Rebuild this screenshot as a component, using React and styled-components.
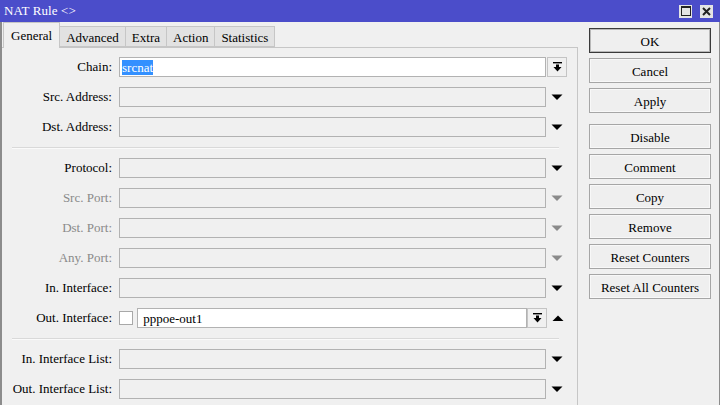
import React from "react";
import styled, { createGlobalStyle } from "styled-components";

const Global = createGlobalStyle`
  html, body { margin: 0; padding: 0; background: #f0f0f0; }
  body { width: 720px; height: 405px; overflow: hidden; }
`;

const Window = styled.div`
  width: 720px;
  height: 405px;
  box-sizing: border-box;
  display: flex;
  flex-direction: column;
  background: #f0f0f0;
  font-family: "Liberation Serif", "Times New Roman", serif;
  font-size: 13px;
  color: #000;
  overflow: hidden;
`;

const TitleBar = styled.div`
  height: 22px;
  flex: none;
  background: #4b4dca;
  display: flex;
  align-items: center;
  padding: 0 7px 0 4px;
  color: #fff;
`;

const Title = styled.div`
  flex: 1;
  font-size: 13px;
  line-height: 22px;
  letter-spacing: 0.1px;
`;

const TitleButtons = styled.div`
  display: flex;
  gap: 8px;
`;

const TitleBtn = styled.div`
  width: 13px;
  height: 13px;
  background: #e4e4e4;
  display: flex;
  align-items: center;
  justify-content: center;
`;

const Main = styled.div`
  flex: 1;
  display: flex;
  border-left: 2px solid #8c8c8c;
  border-right: 1px solid #8c8c8c;
  min-height: 0;
`;

const LeftCol = styled.div`
  width: 576px;
  flex: none;
  display: flex;
  flex-direction: column;
`;

const TabStrip = styled.div`
  height: 26px;
  display: flex;
  align-items: flex-end;
  padding-left: 1px;
  position: relative;
  z-index: 1;
`;

const Tab = styled.div`
  box-sizing: border-box;
  height: ${(p) => (p.$active ? "26px" : "21px")};
  padding: 0 ${(p) => (p.$active ? "7px" : "6px")};
  margin-bottom: ${(p) => (p.$active ? "-1px" : "0")};
  border: 1px solid #c6c6c6;
  border-bottom: ${(p) => (p.$active ? "none" : "1px solid #c6c6c6")};
  background: ${(p) => (p.$active ? "#f0f0f0" : "#e2e2e2")};
  display: flex;
  align-items: center;
  line-height: 1;
  padding-top: ${(p) => (p.$active ? "0" : "1px")};
  margin-left: ${(p) => (p.$active ? "0" : "-1px")};
`;

const Panel = styled.div`
  flex: 1;
  border-top: 1px solid #c6c6c6;
  border-right: 1px solid #c6c6c6;
  padding-top: 9px;
  display: flex;
  flex-direction: column;
`;

const Row = styled.div`
  display: flex;
  align-items: center;
  height: 20px;
  margin-bottom: 10px;
`;

const Label = styled.div`
  width: 110px;
  flex: none;
  text-align: right;
  color: ${(p) => (p.$disabled ? "#8a8a8a" : "#000")};
  margin-right: 7px;
  white-space: nowrap;
  line-height: 20px;
`;

const Field = styled.div`
  box-sizing: border-box;
  width: ${(p) => p.$w}px;
  height: 20px;
  flex: none;
  border: 1px solid #b2b2b2;
  background: ${(p) => (p.$white ? "#fff" : "#f0f0f0")};
  display: flex;
  align-items: center;
  padding-left: 2px;
  line-height: 1;
  white-space: nowrap;
`;

const Selected = styled.span`
  background: #3390ff;
  color: #fff;
  padding: 1px 0;
`;

const ArrowCell = styled.div`
  width: 12px;
  margin-left: 5px;
  display: flex;
  align-items: center;
  justify-content: center;
`;

const SmallBtn = styled.div`
  box-sizing: border-box;
  width: 20px;
  height: 20px;
  flex: none;
  margin-left: ${(p) => p.$ml || 0}px;
  border: 1px solid #c4c4c4;
  background: #f0f0f0;
  display: flex;
  align-items: center;
  justify-content: center;
`;

const Check = styled.div`
  box-sizing: border-box;
  width: 14px;
  height: 14px;
  flex: none;
  border: 1px solid #a8a8a8;
  background: #fff;
  margin-right: 4px;
`;

const Separator = styled.div`
  height: 0;
  margin: 0 18px 9px 10px;
  border-top: 1px solid #d9d9d9;
  border-bottom: 1px solid #fafafa;
`;

const RightCol = styled.div`
  flex: 1;
  padding: 6px 0 0 11px;
  display: flex;
  flex-direction: column;
`;

const Button = styled.div`
  box-sizing: border-box;
  width: 122px;
  height: 25px;
  margin-bottom: 5px;
  margin-top: ${(p) => p.$mt || 0}px;
  border: 1px solid ${(p) => (p.$default ? "#3a3a3a" : "#a6a6a6")};
  box-shadow: inset 0 0 0 1px ${(p) => (p.$default ? "#b8b8b8" : "#f8f8f8")};
  background: #efefef;
  display: flex;
  align-items: center;
  justify-content: center;
  line-height: 1;
  padding-top: 1px;
`;

const Tri = ({ up, color = "#000" }) => (
  <svg width="12" height="7" viewBox="0 0 12 7">
    {up ? (
      <polygon points="0.5,6 11.5,6 6,0.5" fill={color} />
    ) : (
      <polygon points="0.5,0.5 11.5,0.5 6,6" fill={color} />
    )}
  </svg>
);

const DropIcon = () => (
  <svg width="9" height="10" viewBox="0 0 9 10">
    <rect x="0" y="0" width="9" height="1.4" fill="#000" />
    <rect x="3" y="2.5" width="3" height="3" fill="#000" />
    <polygon points="0.5,5 8.5,5 4.5,9.5" fill="#000" />
  </svg>
);

const MaxIcon = () => (
  <svg width="10" height="10" viewBox="0 0 10 10">
    <rect x="0.5" y="0.5" width="9" height="9" fill="none" stroke="#222" strokeWidth="1" />
    <rect x="0" y="0" width="10" height="2" fill="#222" />
  </svg>
);

const CloseIcon = () => (
  <svg width="9" height="9" viewBox="0 0 9 9">
    <path d="M1 1 L8 8 M8 1 L1 8" stroke="#222" strokeWidth="2" />
  </svg>
);

const tabs = ["General", "Advanced", "Extra", "Action", "Statistics"];

const PlainRow = ({ label, disabled, up }) => (
  <Row>
    <Label $disabled={disabled}>{label}</Label>
    <Field $w={427} />
    <ArrowCell>
      <Tri up={up} color={disabled ? "#8a8a8a" : "#000"} />
    </ArrowCell>
  </Row>
);

const buttons = [
  { t: "OK", d: true },
  { t: "Cancel" },
  { t: "Apply" },
  { t: "Disable", mt: 6 },
  { t: "Comment" },
  { t: "Copy" },
  { t: "Remove" },
  { t: "Reset Counters" },
  { t: "Reset All Counters" },
];

export default function App() {
  return (
    <Window>
      <Global />
      <TitleBar>
        <Title>NAT Rule &lt;&gt;</Title>
        <TitleButtons>
          <TitleBtn><MaxIcon /></TitleBtn>
          <TitleBtn><CloseIcon /></TitleBtn>
        </TitleButtons>
      </TitleBar>
      <Main>
        <LeftCol>
          <TabStrip>
            {tabs.map((t, i) => (
              <Tab key={t} $active={i === 0}>{t}</Tab>
            ))}
          </TabStrip>
          <Panel>
            <Row>
              <Label>Chain:</Label>
              <Field $w={427} $white>
                <Selected>srcnat</Selected>
              </Field>
              <SmallBtn $ml={1}><DropIcon /></SmallBtn>
            </Row>
            <PlainRow label="Src. Address:" />
            <PlainRow label="Dst. Address:" />
            <Separator />
            <PlainRow label="Protocol:" />
            <PlainRow label="Src. Port:" disabled />
            <PlainRow label="Dst. Port:" disabled />
            <PlainRow label="Any. Port:" disabled />
            <PlainRow label="In. Interface:" />
            <Row>
              <Label>Out. Interface:</Label>
              <Check />
              <Field $w={390} $white>&nbsp;pppoe-out1</Field>
              <SmallBtn><DropIcon /></SmallBtn>
              <ArrowCell>
                <Tri up />
              </ArrowCell>
            </Row>
            <Separator />
            <PlainRow label="In. Interface List:" />
            <PlainRow label="Out. Interface List:" />
          </Panel>
        </LeftCol>
        <RightCol>
          {buttons.map((b) => (
            <Button key={b.t} $default={b.d} $mt={b.mt}>{b.t}</Button>
          ))}
        </RightCol>
      </Main>
    </Window>
  );
}
